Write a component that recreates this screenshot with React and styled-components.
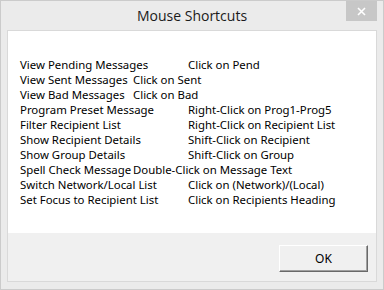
import React from 'react';
import styled, { createGlobalStyle } from 'styled-components';

const GlobalStyle = createGlobalStyle`
  html, body {
    margin: 0;
    padding: 0;
    background: #ebebeb;
  }
  body {
    font-family: "Noto Sans", "Liberation Sans", sans-serif;
  }
`;

const shortcuts = [
  { label: 'View Pending Messages', action: 'Click on Pend' },
  { label: 'View Sent Messages', action: 'Click on Sent', near: true },
  { label: 'View Bad Messages', action: 'Click on Bad', near: true },
  { label: 'Program Preset Message', action: 'Right-Click on Prog1-Prog5' },
  { label: 'Filter Recipient List', action: 'Right-Click on Recipient List' },
  { label: 'Show Recipient Details', action: 'Shift-Click on Recipient' },
  { label: 'Show Group Details', action: 'Shift-Click on Group' },
  { label: 'Spell Check Message', action: 'Double-Click on Message Text', near: true },
  { label: 'Switch Network/Local List', action: 'Click on (Network)/(Local)' },
  { label: 'Set Focus to Recipient List', action: 'Click on Recipients Heading' },
];

const App = () => (
  <>
    <GlobalStyle />
    <Window>
      <TitleBar>
        <span />
        <Title>Mouse Shortcuts</Title>
        <CloseButton aria-label="Close">
          <svg width="9" height="9" viewBox="0 0 9 9">
            <path d="M1 1 L8 8 M8 1 L1 8" stroke="#fff" strokeWidth="1.6" />
          </svg>
        </CloseButton>
      </TitleBar>

      <Panel>
        <Content>
          {shortcuts.map((s) => (
            <Row key={s.label}>
              <Label $near={s.near}>{s.label}</Label>
              <span>{s.action}</span>
            </Row>
          ))}
        </Content>
        <Footer>
          <OkButton>OK</OkButton>
        </Footer>
      </Panel>
    </Window>
  </>
);

export default App;

const Window = styled.div`
  box-sizing: border-box;
  width: 384px;
  height: 290px;
  border: 1px solid #cbcbcb;
  background: #ebebeb;
  display: flex;
  flex-direction: column;
  padding: 0 6px 7px;
`;

const TitleBar = styled.div`
  display: grid;
  grid-template-columns: 31px 1fr 31px;
  align-items: start;
  height: 29px;
`;

const Title = styled.div`
  font-family: "Open Sans", "Noto Sans", sans-serif;
  font-size: 14px;
  line-height: 29px;
  text-align: center;
  color: #1a1a1a;
`;

const CloseButton = styled.div`
  width: 31px;
  height: 20px;
  background: #c7c7c7;
  display: flex;
  align-items: center;
  justify-content: center;
`;

const Panel = styled.div`
  flex: 1;
  display: flex;
  flex-direction: column;
  border: 1px solid #d9d9d9;
`;

const Content = styled.div`
  flex: 1;
  background: #fff;
  padding: 26px 0 0 12px;
`;

const Row = styled.div`
  display: flex;
  font-size: 11.4px;
  line-height: 15px;
  color: #000;
  white-space: nowrap;
`;

const Label = styled.span`
  width: ${(p) => (p.$near ? '113px' : '168px')};
  flex-shrink: 0;
`;

const Footer = styled.div`
  height: 48px;
  background: #f0f0f0;
  display: flex;
  justify-content: flex-end;
  align-items: flex-start;
  padding: 12px 8px 0 0;
  box-sizing: border-box;
`;

const OkButton = styled.div`
  box-sizing: border-box;
  width: 89px;
  height: 27px;
  background: #f0f0f0;
  border-top: 1px solid #fff;
  border-left: 1px solid #fff;
  border-right: 1px solid #696969;
  border-bottom: 1px solid #696969;
  box-shadow: inset -1px -1px 0 #a0a0a0;
  display: flex;
  align-items: center;
  justify-content: center;
  font-size: 12px;
  color: #000;
`;
